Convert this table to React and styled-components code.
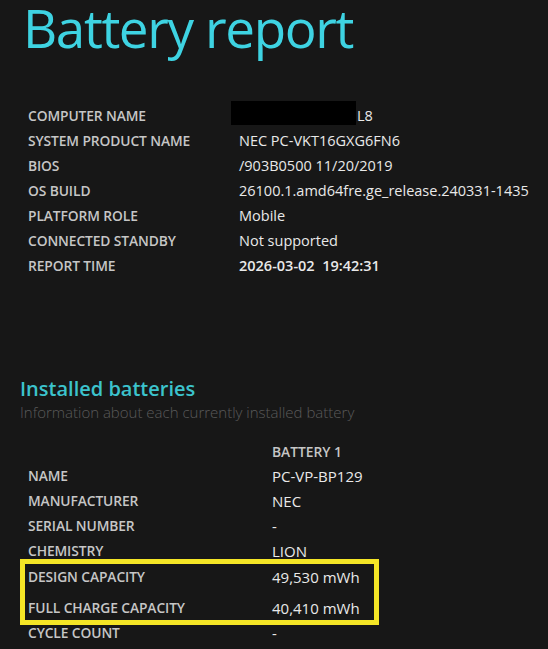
import styled, { createGlobalStyle } from 'styled-components';

const GlobalStyle = createGlobalStyle`
  html, body {
    margin: 0;
    padding: 0;
    background: #171717;
  }
  body {
    font-family: 'Open Sans', 'Noto Sans', sans-serif;
    color: #e6e6e6;
  }
`;

const systemInfo = [
  { label: 'COMPUTER NAME', value: 'L8', redacted: true },
  { label: 'SYSTEM PRODUCT NAME', value: 'NEC PC-VKT16GXG6FN6' },
  { label: 'BIOS', value: '/903B0500 11/20/2019' },
  { label: 'OS BUILD', value: '26100.1.amd64fre.ge_release.240331-1435' },
  { label: 'PLATFORM ROLE', value: 'Mobile' },
  { label: 'CONNECTED STANDBY', value: 'Not supported' },
  { label: 'REPORT TIME', value: '2026-03-02\u00a0\u00a019:42:31', strong: true },
];

const batteryInfo = [
  { label: 'NAME', value: 'PC-VP-BP129' },
  { label: 'MANUFACTURER', value: 'NEC' },
  { label: 'SERIAL NUMBER', value: '-' },
  { label: 'CHEMISTRY', value: 'LION' },
];

const capacities = [
  { label: 'DESIGN CAPACITY', value: '49,530 mWh' },
  { label: 'FULL CHARGE CAPACITY', value: '40,410 mWh' },
];

const App = () => {
  return (
    <Page>
      <GlobalStyle />
      <Title>Battery report</Title>

      <InfoTable>
        {systemInfo.map((item) => (
          <Row key={item.label} $labelWidth={211}>
            <Label>{item.label}</Label>
            <Value $strong={item.strong}>
              {item.redacted && <Redacted />}
              {item.value}
            </Value>
          </Row>
        ))}
      </InfoTable>

      <SectionTitle>Installed batteries</SectionTitle>
      <SectionNote>Information about each currently installed battery</SectionNote>

      <BatteryTable>
        <Row $labelWidth={244} $height={23}>
          <Label />
          <ColumnHead>BATTERY 1</ColumnHead>
        </Row>
        {batteryInfo.map((item) => (
          <Row key={item.label} $labelWidth={244}>
            <Label>{item.label}</Label>
            <Value $size={15}>{item.value}</Value>
          </Row>
        ))}
        <Highlight>
          {capacities.map((item) => (
            <Row key={item.label} $labelWidth={244}>
              <Label>{item.label}</Label>
              <Value $size={15}>{item.value}</Value>
            </Row>
          ))}
        </Highlight>
        <Row $labelWidth={244}>
          <Label>CYCLE COUNT</Label>
          <Value $size={15}>-</Value>
        </Row>
      </BatteryTable>
    </Page>
  );
};

const Page = styled.div`
  padding: 0 28px;
  min-height: 649px;
  box-sizing: border-box;
`;

const Title = styled.h1`
  margin: 0 0 0 -5px;
  height: 103px;
  font-size: 53px;
  line-height: 56px;
  font-weight: 400;
  color: #3ed3e2;
  letter-spacing: -1.4px;
`;

const InfoTable = styled.div`
  display: flex;
  flex-direction: column;
`;

const Row = styled.div`
  display: grid;
  grid-template-columns: ${(p) => p.$labelWidth}px 1fr;
  align-items: center;
  height: ${(p) => p.$height || 25}px;
`;

const Label = styled.div`
  font-size: 13.8px;
  font-weight: 600;
  color: #c6c6c6;
  white-space: nowrap;
  letter-spacing: -0.1px;
`;

const Value = styled.div`
  display: flex;
  align-items: center;
  font-size: ${(p) => p.$size || 14.5}px;
  font-weight: ${(p) => (p.$strong ? 600 : 400)};
  color: #e9e9e9;
  white-space: nowrap;
`;

const Redacted = styled.span`
  display: inline-block;
  width: 125px;
  height: 24px;
  margin: -6px 1px 0 -8px;
  background: #000;
`;

const SectionTitle = styled.h2`
  margin: 98px 0 0 -8px;
  font-size: 20px;
  line-height: 26px;
  font-weight: 600;
  color: #3cc3cc;
`;

const SectionNote = styled.div`
  margin-left: -8px;
  font-size: 15px;
  line-height: 20px;
  font-weight: 300;
  color: #5a5a5a;
`;

const BatteryTable = styled.div`
  display: flex;
  flex-direction: column;
  margin-top: 18px;
`;

const ColumnHead = styled.div`
  font-size: 13.8px;
  font-weight: 600;
  color: #c6c6c6;
`;

const Highlight = styled.div`
  display: flex;
  flex-direction: column;
  gap: 6px;
  width: 346px;
  margin: -4px 0 -5px -8px;
  padding: 0 0 0 3px;
  border: 5px solid #f4e526;
`;

export default App;
